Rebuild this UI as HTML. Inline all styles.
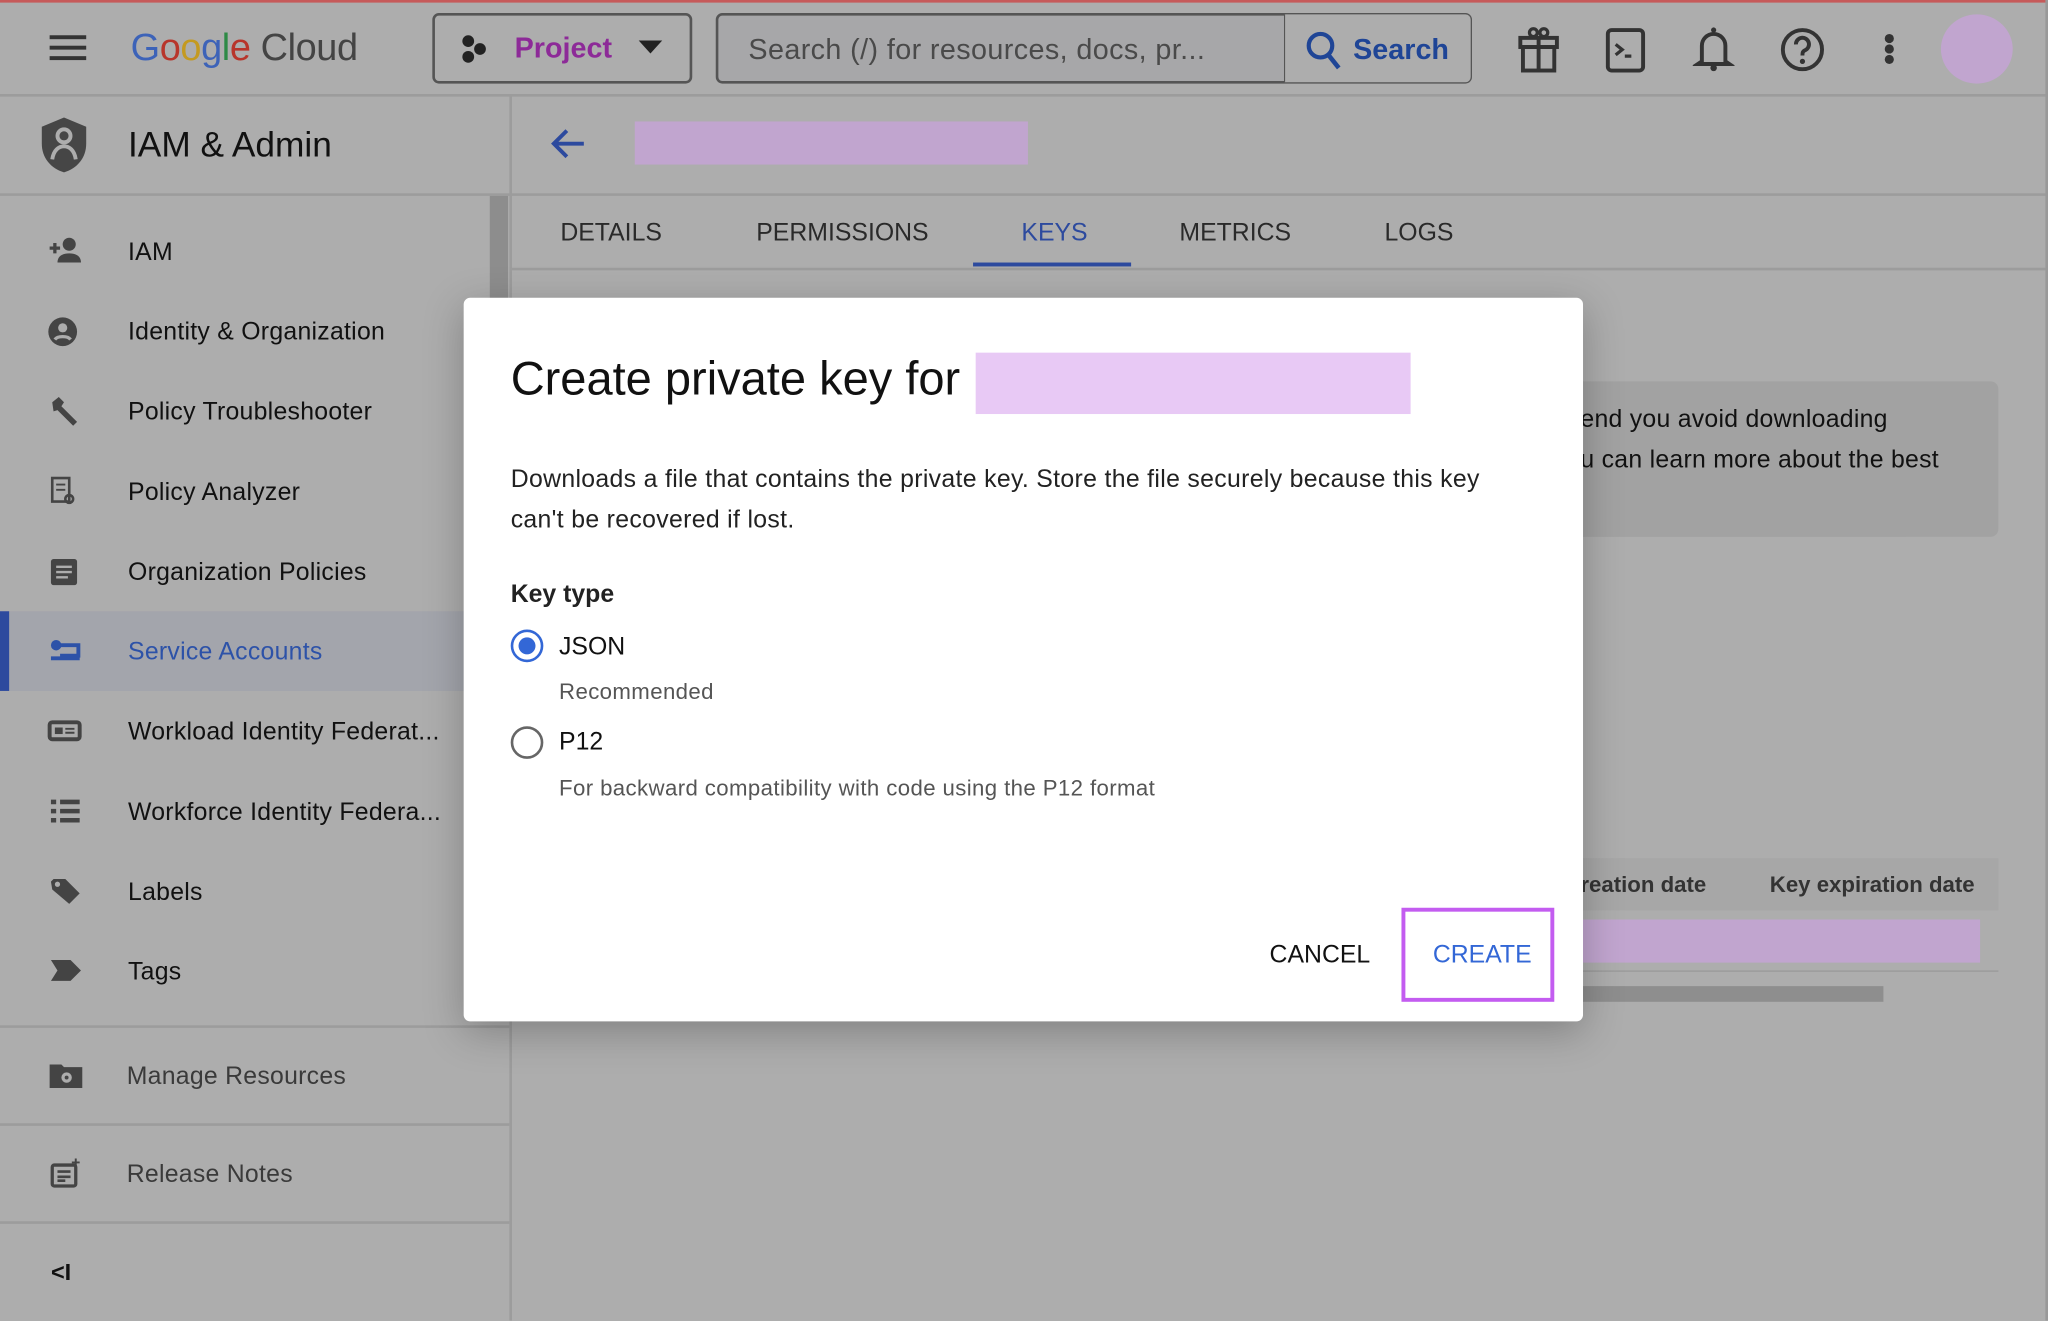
<!DOCTYPE html>
<html><head><meta charset="utf-8"><style>
*{box-sizing:border-box;margin:0;padding:0}
html,body{width:2048px;height:1320px;overflow:hidden;background:#adadad;font-family:"Liberation Sans",sans-serif}
#w{position:absolute;left:0;top:0;width:1568px;height:1011px;transform:scale(1.306122);transform-origin:0 0;background:#adadad;overflow:hidden}
.a{position:absolute}
.hl{position:absolute;height:2px;background:#9c9c9c}
.nav{position:absolute;left:98px;font-size:19px;color:#111;letter-spacing:0.2px}
.ic{position:absolute;left:36px}
</style></head><body><div id="w">
<div class="a" style="left:0;top:0;width:1568px;height:2px;background:#c65a5a"></div>
<!-- header -->
<div class="a" style="left:38px;top:27px;width:28px;height:3px;background:#333;box-shadow:0 8px 0 #333,0 16px 0 #333"></div>
<div class="a" style="left:100px;top:21px;font-size:29px;letter-spacing:-0.3px"><span style="color:#3d63b8">G</span><span style="color:#b8352b">o</span><span style="color:#c49a20">o</span><span style="color:#3d63b8">g</span><span style="color:#2d8a45">l</span><span style="color:#b8352b">e</span> <span style="color:#444">Cloud</span></div>
<div class="a" style="left:331px;top:10px;width:199px;height:54px;border:2px solid #555;border-radius:5px"></div>
<div class="a" style="left:354px;top:27px;width:9px;height:9px;border-radius:50%;background:#222;box-shadow:9px 6px 0 #222,0 12px 0 #222"></div>
<div class="a" style="left:394px;top:24px;font-size:22px;font-weight:bold;color:#8d2a98">Project</div>
<div class="a" style="left:489px;top:31px;border-left:9px solid transparent;border-right:9px solid transparent;border-top:10px solid #222"></div>
<div class="a" style="left:548px;top:10px;width:579px;height:54px;border:2px solid #555;border-radius:5px;background:#a7a7a9"></div>
<div class="a" style="left:983px;top:11px;width:143px;height:52px;background:#adadad;border-left:1px solid #555;border-radius:0 4px 4px 0"></div>
<div class="a" style="left:573px;top:25px;font-size:22px;color:#4a4a4a;letter-spacing:0.3px">Search (/) for resources, docs, pr...</div>
<svg class="a" style="left:998px;top:22px" width="30" height="32" viewBox="0 0 30 32"><circle cx="13" cy="13" r="9" fill="none" stroke="#1f4596" stroke-width="3.2"/><path d="M19 20l8 10" stroke="#1f4596" stroke-width="3.5"/></svg>
<div class="a" style="left:1036px;top:25px;font-size:22px;font-weight:bold;color:#1f4596">Search</div>
<svg class="a" style="left:1160px;top:18px" width="36" height="40" viewBox="0 0 36 40"><rect x="4" y="11" width="28" height="7" fill="none" stroke="#333" stroke-width="3"/><rect x="6" y="18" width="24" height="18" fill="none" stroke="#333" stroke-width="3"/><path d="M18 11v25" stroke="#333" stroke-width="3"/><circle cx="14" cy="7" r="3" fill="none" stroke="#333" stroke-width="2.5"/><circle cx="22" cy="7" r="3" fill="none" stroke="#333" stroke-width="2.5"/></svg>
<svg class="a" style="left:1228px;top:20px" width="34" height="36" viewBox="0 0 34 36"><rect x="3" y="3" width="27" height="31" rx="3" fill="none" stroke="#333" stroke-width="3"/><path d="M9 14l5 4-5 4M16 23h5" stroke="#333" stroke-width="2.5" fill="none"/></svg>
<svg class="a" style="left:1296px;top:18px" width="32" height="40" viewBox="0 0 32 40"><path d="M7 29V17a9 9 0 0 1 18 0v12l3 2H4z" fill="none" stroke="#333" stroke-width="3"/><circle cx="16" cy="34" r="2.5" fill="#333"/><circle cx="16" cy="5" r="2" fill="#333"/></svg>
<svg class="a" style="left:1362px;top:19px" width="36" height="38" viewBox="0 0 36 38"><circle cx="18" cy="19" r="15" fill="none" stroke="#333" stroke-width="3"/><path d="M13 15a5 5 0 1 1 7 4.5c-2 1-2 2-2 4" fill="none" stroke="#333" stroke-width="3"/><circle cx="18" cy="28" r="2" fill="#333"/></svg>
<div class="a" style="left:1443px;top:26px;width:7px;height:7px;border-radius:50%;background:#333;box-shadow:0 8px 0 #333,0 16px 0 #333"></div>
<div class="a" style="left:1486px;top:11px;width:55px;height:53px;border-radius:50%;background:#c1a5cf"></div>
<div class="hl" style="left:0;top:72px;width:1568px"></div>
<!-- sidebar -->
<svg class="a" style="left:29px;top:88px" width="40" height="46" viewBox="0 0 40 46"><path d="M20 2L37 9v13c0 11-7 19-17 22C10 41 3 33 3 22V9z" fill="#464646"/><circle cx="20" cy="16" r="5" fill="none" stroke="#adadad" stroke-width="3"/><path d="M11 34c1-7 5-10 9-10s8 3 9 10" fill="none" stroke="#adadad" stroke-width="3"/></svg>
<div class="a" style="left:98px;top:96px;font-size:27px;color:#111">IAM &amp; Admin</div>
<div class="a" style="left:390px;top:73px;width:2px;height:938px;background:#9c9c9c"></div>
<div class="hl" style="left:0;top:148px;width:1568px"></div>
<div class="a" style="left:375px;top:150px;width:14px;height:80px;background:#8d8d8d"></div>
<div class="a" style="left:0;top:468px;width:390px;height:61px;background:#a3a5ac"></div>
<div class="a" style="left:0;top:468px;width:7px;height:61px;background:#2d4a9e"></div>
<div class="nav" style="top:183px">IAM</div>
<div class="nav" style="top:244px">Identity &amp; Organization</div>
<div class="nav" style="top:305px">Policy Troubleshooter</div>
<div class="nav" style="top:367px">Policy Analyzer</div>
<div class="nav" style="top:428px">Organization Policies</div>
<div class="nav" style="top:489px;color:#2d52a8">Service Accounts</div>
<div class="nav" style="top:550px">Workload Identity Federat...</div>
<div class="nav" style="top:612px">Workforce Identity Federa...</div>
<div class="nav" style="top:673px">Labels</div>
<div class="nav" style="top:734px">Tags</div>
<div class="nav" style="top:814px;left:97px;color:#3a3a3a">Manage Resources</div>
<div class="nav" style="top:889px;left:97px;color:#3a3a3a">Release Notes</div>
<div class="hl" style="left:0;top:785px;width:390px"></div>
<div class="hl" style="left:0;top:860px;width:390px"></div>
<div class="hl" style="left:0;top:935px;width:390px"></div>
<div class="a" style="left:39px;top:964px;font-size:18px;font-weight:bold;color:#111">&lt;I</div>
<!-- sidebar icons -->
<svg class="ic" style="top:180px" width="28" height="24" viewBox="0 0 28 24"><circle cx="17" cy="7" r="5" fill="#444"/><path d="M8 21c0-5 4-7 9-7s9 2 9 7z" fill="#444"/><path d="M2 10h8M6 6v8" stroke="#444" stroke-width="2.5"/></svg>
<svg class="ic" style="top:242px" width="26" height="24" viewBox="0 0 26 24"><circle cx="12" cy="12" r="11" fill="#444"/><circle cx="12" cy="9" r="3.5" fill="#adadad"/><path d="M6 18c2-3 10-3 12 0" stroke="#adadad" stroke-width="2.5" fill="none"/></svg>
<svg class="ic" style="top:302px" width="26" height="26" viewBox="0 0 26 26"><path d="M4 6l5-4 4 4-2 3 12 12-3 3L8 12 5 13z" fill="#444"/></svg>
<svg class="ic" style="top:363px" width="24" height="26" viewBox="0 0 24 26"><rect x="4" y="3" width="13" height="18" fill="none" stroke="#444" stroke-width="2"/><path d="M7 8h7M7 12h7" stroke="#444" stroke-width="1.5"/><circle cx="17" cy="19" r="3" fill="none" stroke="#444" stroke-width="2"/></svg>
<svg class="ic" style="top:426px" width="26" height="24" viewBox="0 0 26 24"><rect x="3" y="2" width="20" height="20" rx="2" fill="#444"/><path d="M7 8h12M7 12h12M7 16h9" stroke="#adadad" stroke-width="1.8"/></svg>
<svg class="ic" style="top:488px" width="28" height="20" viewBox="0 0 28 20"><circle cx="7" cy="6" r="4" fill="#2d52a8"/><path d="M10 6h14v8H10M3 16h22" stroke="#2d52a8" stroke-width="3" fill="none"/></svg>
<svg class="ic" style="top:550px" width="28" height="20" viewBox="0 0 28 20"><rect x="2" y="3" width="23" height="13" rx="2" fill="none" stroke="#444" stroke-width="3"/><rect x="6" y="7" width="6" height="5" fill="#444"/><path d="M14 8h7M14 11h7" stroke="#444" stroke-width="1.5"/></svg>
<svg class="ic" style="top:610px" width="28" height="22" viewBox="0 0 28 22"><path d="M3 4h4M10 4h15M3 11h4M10 11h15M3 18h4M10 18h15" stroke="#444" stroke-width="3.5"/></svg>
<svg class="ic" style="top:671px" width="28" height="24" viewBox="0 0 28 24"><path d="M3 4l2-2h9l11 11-8 8L4 10z" fill="#444"/><circle cx="8" cy="6" r="2" fill="#adadad"/></svg>
<svg class="ic" style="top:734px" width="28" height="20" viewBox="0 0 28 20"><path d="M3 1h15l8 8-8 8H3l5-8z" fill="#444"/></svg>
<svg class="ic" style="top:811px" width="30" height="24" viewBox="0 0 30 24"><path d="M2 4h9l2 2h14v16H2z" fill="#444"/><circle cx="15" cy="14" r="4" fill="#adadad"/><circle cx="15" cy="14" r="1.5" fill="#444"/></svg>
<svg class="ic" style="top:885px" width="28" height="28" viewBox="0 0 28 28"><rect x="4" y="7" width="18" height="16" rx="1.5" fill="none" stroke="#444" stroke-width="2.5"/><path d="M8 12h10M8 16h10M8 19h6" stroke="#444" stroke-width="2"/><path d="M22 2v6M19 5h6" stroke="#444" stroke-width="1.5"/></svg>
<!-- main -->
<svg class="a" style="left:420px;top:96px" width="30" height="28" viewBox="0 0 30 28"><path d="M27 14H5M14 4L4 14l10 10" fill="none" stroke="#2d4a9e" stroke-width="3"/></svg>
<div class="a" style="left:486px;top:93px;width:301px;height:33px;background:#c1a5cf"></div>
<div class="a" style="left:429px;top:168px;font-size:19px;color:#2a2a2a">DETAILS</div>
<div class="a" style="left:579px;top:168px;font-size:19px;color:#2a2a2a">PERMISSIONS</div>
<div class="a" style="left:782px;top:168px;font-size:19px;color:#2d4a9e">KEYS</div>
<div class="a" style="left:745px;top:201px;width:121px;height:3px;background:#2d4a9e"></div>
<div class="a" style="left:903px;top:168px;font-size:19px;color:#2a2a2a">METRICS</div>
<div class="a" style="left:1060px;top:168px;font-size:19px;color:#2a2a2a">LOGS</div>
<div class="hl" style="left:392px;top:205px;width:1176px"></div>
<div class="a" style="left:1150px;top:292px;width:380px;height:119px;background:#a2a2a2;border-radius:6px"></div>
<div class="a" style="left:1210px;top:306px;font-size:19px;color:#111;line-height:31px;letter-spacing:0.2px">end you avoid downloading<br>u can learn more about the best</div>
<div class="a" style="left:1150px;top:657px;width:380px;height:40px;background:#a7a7a7"></div>
<div class="a" style="left:1210px;top:668px;font-size:17px;font-weight:bold;color:#333">reation date</div>
<div class="a" style="left:1355px;top:668px;font-size:17px;font-weight:bold;color:#333">Key expiration date</div>
<div class="a" style="left:1210px;top:704px;width:306px;height:33px;background:#c1a5cf"></div>
<div class="a" style="left:1150px;top:743px;width:380px;height:1px;background:#999"></div>
<div class="a" style="left:1210px;top:755px;width:232px;height:12px;background:#8e8e8e"></div>
<div class="a" style="left:1566px;top:0;width:2px;height:1011px;background:#999"></div>
<!-- dialog -->
<div class="a" style="left:355px;top:228px;width:857px;height:554px;background:#fff;border-radius:5px;box-shadow:0 8px 30px rgba(0,0,0,.25)"></div>
<div class="a" style="left:391px;top:269px;font-size:36px;color:#111">Create private key for</div>
<div class="a" style="left:747px;top:270px;width:333px;height:47px;background:#e8c9f5"></div>
<div class="a" style="left:391px;top:352px;font-size:19px;color:#222;line-height:31px;letter-spacing:0.25px">Downloads a file that contains the private key. Store the file securely because this key<br>can't be recovered if lost.</div>
<div class="a" style="left:391px;top:445px;font-size:19px;font-weight:bold;color:#222">Key type</div>
<div class="a" style="left:391px;top:482px;width:25px;height:25px;border-radius:50%;border:2.5px solid #3367d6"></div>
<div class="a" style="left:397px;top:488px;width:13px;height:13px;border-radius:50%;background:#3367d6"></div>
<div class="a" style="left:428px;top:485px;font-size:19px;color:#111">JSON</div>
<div class="a" style="left:428px;top:520px;font-size:17px;color:#555;letter-spacing:0.3px">Recommended</div>
<div class="a" style="left:391px;top:556px;width:25px;height:25px;border-radius:50%;border:2.5px solid #666"></div>
<div class="a" style="left:428px;top:558px;font-size:19px;color:#111">P12</div>
<div class="a" style="left:428px;top:594px;font-size:17px;color:#555;letter-spacing:0.3px">For backward compatibility with code using the P12 format</div>
<div class="a" style="left:972px;top:721px;font-size:19px;color:#111">CANCEL</div>
<div class="a" style="left:1073px;top:695px;width:117px;height:72px;border:3px solid #c35cf0"></div>
<div class="a" style="left:1097px;top:721px;font-size:19px;color:#3367d6">CREATE</div>
</div></body></html>
